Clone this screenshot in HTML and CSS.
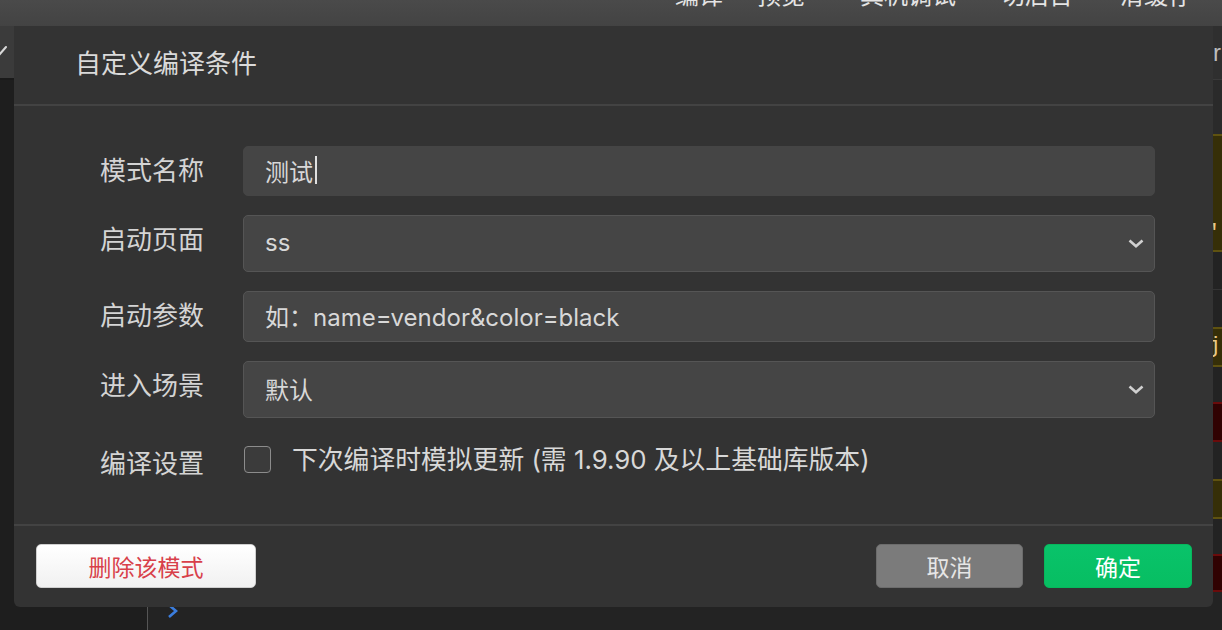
FILE: index.html
```html
<!DOCTYPE html>
<html lang="zh-CN">
<head>
<meta charset="utf-8">
<title>自定义编译条件</title>
<link rel="stylesheet" href="styles.css">
</head>
<body>
<div class="app">
  <header class="topbar">
    <span class="tb-item">编译</span>
    <span class="tb-item">预览</span>
    <span class="tb-item">真机调试</span>
    <span class="tb-item">切后台</span>
    <span class="tb-item">清缓存</span>
  </header>
  <div class="workspace">
    <aside class="sidebar">
      <div class="side-head">
        <svg class="side-check" width="8" height="12" viewBox="0 0 8 12"><path d="M-1 10 L6 2" fill="none" stroke="#d8d8d8" stroke-width="2" stroke-linecap="round"/></svg>
      </div>
    </aside>
    <main class="editor">
      <div class="tabbar"><span class="tab-text">r</span></div>
      <div class="ln ln-plain h54"></div>
      <div class="ln ln-warn h118 ln-bottom"><span class="code code-warn">'</span></div>
      <div class="ln h37"></div>
      <div class="ln ln-sep h38"></div>
      <div class="ln ln-warn h40"><span class="code code-warn">j</span></div>
      <div class="ln h35"></div>
      <div class="ln ln-err h40"></div>
      <div class="ln h37"></div>
      <div class="ln ln-warn h40"></div>
      <div class="ln h35"></div>
      <div class="ln ln-err h38"></div>
      <div class="ln h37 ln-last">
        <svg class="fold" width="14" height="16" viewBox="0 0 14 16"><path d="M3 2 L10 8 L3 14" fill="none" stroke="#3b7ddd" stroke-width="2.6" stroke-linejoin="miter"/></svg>
      </div>
    </main>
  </div>

  <div class="dialog">
    <div class="dlg-head"><span class="dlg-title">自定义编译条件</span></div>
    <div class="dlg-body">
      <div class="row">
        <div class="label">模式名称</div>
        <div class="field field-name focused"><span class="value">测试</span><span class="caret"></span></div>
      </div>
      <div class="row">
        <div class="label">启动页面</div>
        <div class="field field-select">
          <span class="value">ss</span>
          <svg class="chev" width="16" height="9" viewBox="0 0 16 9"><path d="M1.5 1.5 L8 7.2 L14.5 1.5" fill="none" stroke="#d0d0d0" stroke-width="2.6"/></svg>
        </div>
      </div>
      <div class="row">
        <div class="label">启动参数</div>
        <div class="field field-param"><span class="value">如：name=vendor&amp;color=black</span></div>
      </div>
      <div class="row">
        <div class="label">进入场景</div>
        <div class="field field-select">
          <span class="value">默认</span>
          <svg class="chev" width="16" height="9" viewBox="0 0 16 9"><path d="M1.5 1.5 L8 7.2 L14.5 1.5" fill="none" stroke="#d0d0d0" stroke-width="2.6"/></svg>
        </div>
      </div>
      <div class="row row-check">
        <div class="label">编译设置</div>
        <span class="checkbox"></span>
        <span class="check-text">下次编译时模拟更新 (需 1.9.90 及以上基础库版本)</span>
      </div>
    </div>
    <div class="dlg-foot">
      <button class="btn btn-delete">删除该模式</button>
      <div class="foot-right">
        <button class="btn btn-cancel">取消</button>
        <button class="btn btn-ok">确定</button>
      </div>
    </div>
  </div>
</div>
</body>
</html>
```

FILE: styles.css
```css
* { box-sizing: border-box; }

html, body {
  margin: 0;
  padding: 0;
}

body {
  width: 1222px;
  height: 630px;
  overflow: hidden;
  background: #222222;
  font-family: "Inter", "Noto Sans CJK SC", sans-serif;
}

.app {
  position: relative;
  width: 1222px;
  height: 630px;
  display: flex;
  flex-direction: column;
}

/* ---------- top toolbar (labels cut off at top) ---------- */
.topbar {
  height: 26px;
  flex: none;
  background: linear-gradient(#4a4a4a, #434343);
  display: flex;
  align-items: flex-start;
  padding-left: 675px;
  overflow: hidden;
}

.tb-item {
  font-family: "Noto Sans CJK SC", sans-serif;
  font-size: 24px;
  line-height: 24px;
  color: #e4e4e4;
  margin-top: -18px;
  white-space: nowrap;
}
.tb-item:nth-child(2) { margin-left: 34px; }
.tb-item:nth-child(3) { margin-left: 55px; }
.tb-item:nth-child(4) { margin-left: 45px; }
.tb-item:nth-child(5) { margin-left: 47px; }

/* ---------- background workspace ---------- */
.workspace {
  flex: 1;
  display: flex;
  min-height: 0;
}

.sidebar {
  width: 148px;
  flex: none;
  background: #1e1e1e;
  border-right: 1px solid #555555;
}

.side-head {
  height: 54px;
  background: #3b3b3b;
  border-bottom: 2px solid #1a1a1a;
  display: flex;
  align-items: center;
}

.side-check {
  display: block;
  margin-top: -2px;
}

.editor {
  flex: 1;
  display: flex;
  flex-direction: column;
  background: #232323;
  overflow: hidden;
}

.tabbar {
  height: 54px;
  flex: none;
  background: #2f2f2f;
  border-bottom: 1px solid #3a3a3a;
  display: flex;
  align-items: center;
  justify-content: flex-end;
  padding-right: 1px;
}

.tab-text {
  font-family: "Liberation Sans", sans-serif;
  font-size: 24px;
  color: #bdbdbd;
}

.ln {
  flex: none;
  display: flex;
  align-items: center;
  justify-content: flex-end;
  background: #232323;
}
.ln-plain { background: #2a2a2a; }
.ln-sep { border-top: 1px solid #343434; }
.ln-warn {
  background: #362f08;
  border-top: 2px solid #5f5210;
  border-bottom: 2px solid #5f5210;
}
.ln-err {
  background: #300202;
  border-top: 2px solid #6a0b0b;
  border-bottom: 2px solid #6a0b0b;
}
.ln-bottom { align-items: flex-end; padding-bottom: 4px; }
.ln-last { justify-content: flex-start; align-items: flex-start; }

.h35 { height: 35px; }
.h37 { height: 37px; }
.h38 { height: 38px; }
.h40 { height: 40px; }
.h54 { height: 54px; }
.h118 { height: 118px; }

.code {
  font-family: "Liberation Mono", monospace;
  font-size: 22px;
  line-height: 24px;
  padding-right: 1px;
}
.code-warn { color: #e8c98a; }

.fold {
  display: block;
  margin-left: 18px;
  margin-top: 11px;
}

/* ---------- dialog ---------- */
.dialog {
  position: absolute;
  left: 14px;
  top: 26px;
  width: 1199px;
  height: 581px;
  background: #333333;
  border-radius: 0 0 6px 6px;
  display: flex;
  flex-direction: column;
}

.dlg-head {
  height: 80px;
  flex: none;
  padding-left: 61px;
  display: flex;
  align-items: center;
  border-bottom: 2px solid #434343;
}

.dlg-title {
  font-family: "Noto Sans CJK SC", sans-serif;
  font-size: 26px;
  line-height: 36px;
  color: #dadada;
  margin-top: -6px;
}

.dlg-body {
  flex: 1;
  padding: 40px 58px 0 86px;
}

.row {
  display: flex;
  align-items: flex-start;
  margin-bottom: 19px;
}

.label {
  width: 143px;
  flex: none;
  font-family: "Noto Sans CJK SC", sans-serif;
  font-size: 26px;
  line-height: 50px;
  color: #d4d4d4;
  margin-top: -2px;
}

.field {
  width: 912px;
  background: #454545;
  border: 1px solid #555555;
  border-radius: 5px;
  padding-left: 21px;
  padding-right: 10px;
  display: flex;
  align-items: center;
  font-size: 24px;
  color: #d8d8d8;
}

.field.focused { border-color: #454545; }

.field-name { height: 50px; }
.field-select { height: 57px; justify-content: space-between; }
.field-param { height: 51px; }

.value {
  white-space: nowrap;
  margin-top: -2px;
}

.caret {
  width: 2px;
  height: 28px;
  background: #e0e0e0;
  margin-left: 2px;
  margin-top: -2px;
}

.chev { display: block; }

.row-check {
  margin-top: 28px;
  margin-bottom: 0;
  height: 27px;
  align-items: center;
}

.row-check .label {
  line-height: 36px;
  margin-top: 5px;
}

.checkbox {
  width: 27px;
  height: 27px;
  flex: none;
  margin-left: 1px;
  margin-right: 21px;
  border: 1px solid #8c8c8c;
  border-radius: 4px;
  background: #3b3b3b;
}

.check-text {
  font-size: 25.8px;
  color: #d8d8d8;
  white-space: nowrap;
  margin-top: -4px;
}

/* ---------- footer ---------- */
.dlg-foot {
  height: 83px;
  flex: none;
  border-top: 2px solid #434343;
  padding: 18px 21px 19px 22px;
  display: flex;
  justify-content: space-between;
}

.foot-right {
  display: flex;
  gap: 21px;
}

.btn {
  height: 44px;
  border-radius: 5px;
  font-family: "Noto Sans CJK SC", sans-serif;
  font-size: 23px;
  display: flex;
  align-items: center;
  justify-content: center;
  padding: 0;
  cursor: pointer;
}

.btn-delete {
  width: 220px;
  background: linear-gradient(#ffffff, #f1f1f1);
  border: 1px solid #cfcfcf;
  color: #d8404a;
}

.btn-cancel {
  width: 147px;
  background: #7b7b7b;
  border: 1px solid #6c6c6c;
  color: #e6e6e6;
}

.btn-ok {
  width: 148px;
  background: linear-gradient(#09c36a, #07be62);
  border: 1px solid #06b85c;
  color: #ffffff;
}
```
